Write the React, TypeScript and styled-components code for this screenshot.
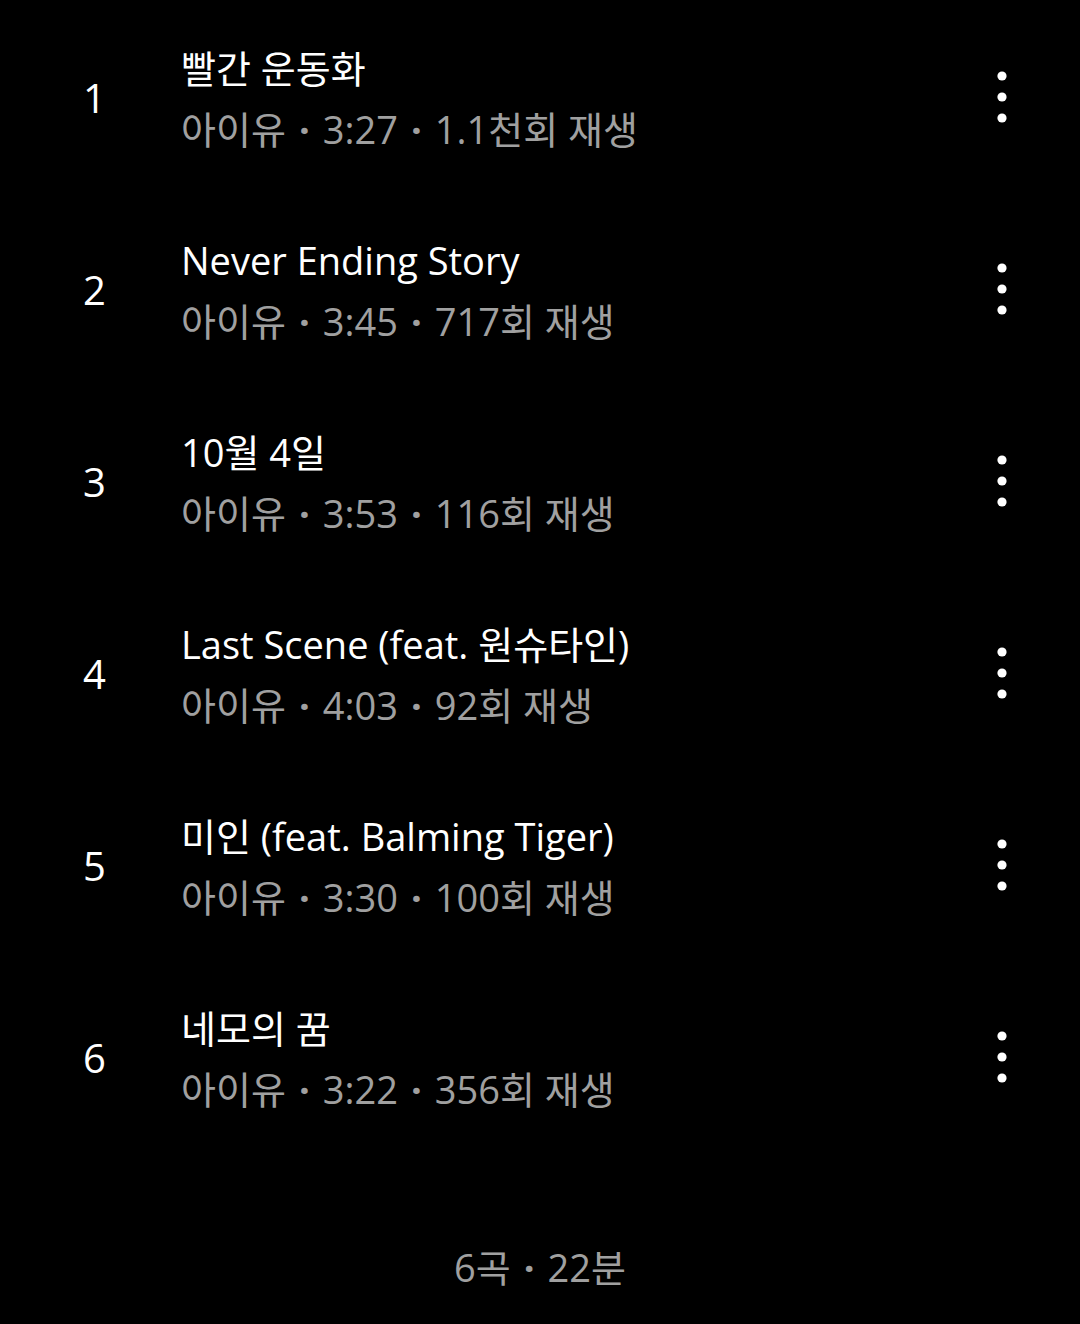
import React from "react";
import styled, { createGlobalStyle } from "styled-components";

const Global = createGlobalStyle`
  html, body { margin: 0; padding: 0; background: #000; }
  body { font-family: "Open Sans", "Noto Sans CJK KR", sans-serif; }
`;

const Page = styled.div`
  width: 1080px;
  height: 1324px;
  background: #000;
  display: flex;
  flex-direction: column;
  padding-top: 3px;
  box-sizing: border-box;
`;

const List = styled.div`
  display: flex;
  flex-direction: column;
`;

const Row = styled.div`
  height: 192px;
  display: grid;
  grid-template-columns: 181px 1fr 100px;
  align-items: center;
`;

const Num = styled.div`
  color: #fff;
  font-size: 40px;
  padding-left: 83px;
  margin-top: -3px;
`;

const Info = styled.div`
  display: flex;
  flex-direction: column;
`;

const Title = styled.div`
  color: #fff;
  font-size: 38px;
  line-height: 61px;
`;

const Sub = styled.div`
  color: #a0a0a0;
  font-size: 38px;
  line-height: 61px;
`;

const Sep = styled.span`
  margin: 0 13px;
  font-weight: 700;
`;

const More = styled.div`
  display: flex;
  justify-content: flex-start;
  margin-top: -4px;
`;

const Footer = styled.div`
  margin-top: 87px;
  text-align: center;
  color: #a0a0a0;
  font-size: 38px;
  line-height: 50px;
`;

const Dots = () => (
  <svg width="44" height="60" viewBox="0 0 44 60">
    <circle cx="22" cy="9" r="4.6" fill="#fff" />
    <circle cx="22" cy="30" r="4.6" fill="#fff" />
    <circle cx="22" cy="51" r="4.6" fill="#fff" />
  </svg>
);

const songs = [
  { t: "빨간 운동화", d: "3:27", p: "1.1천회 재생" },
  { t: "Never Ending Story", d: "3:45", p: "717회 재생" },
  { t: "10월 4일", d: "3:53", p: "116회 재생" },
  { t: "Last Scene (feat. 원슈타인)", d: "4:03", p: "92회 재생" },
  { t: "미인 (feat. Balming Tiger)", d: "3:30", p: "100회 재생" },
  { t: "네모의 꿈", d: "3:22", p: "356회 재생" },
];

export default function App() {
  return (
    <Page>
      <Global />
      <List>
        {songs.map((s, i) => (
          <Row key={i}>
            <Num>{i + 1}</Num>
            <Info>
              <Title>{s.t}</Title>
              <Sub>
                아이유<Sep>·</Sep>{s.d}<Sep>·</Sep>{s.p}
              </Sub>
            </Info>
            <More>
              <Dots />
            </More>
          </Row>
        ))}
      </List>
      <Footer>
        6곡<Sep>·</Sep>22분
      </Footer>
    </Page>
  );
}
